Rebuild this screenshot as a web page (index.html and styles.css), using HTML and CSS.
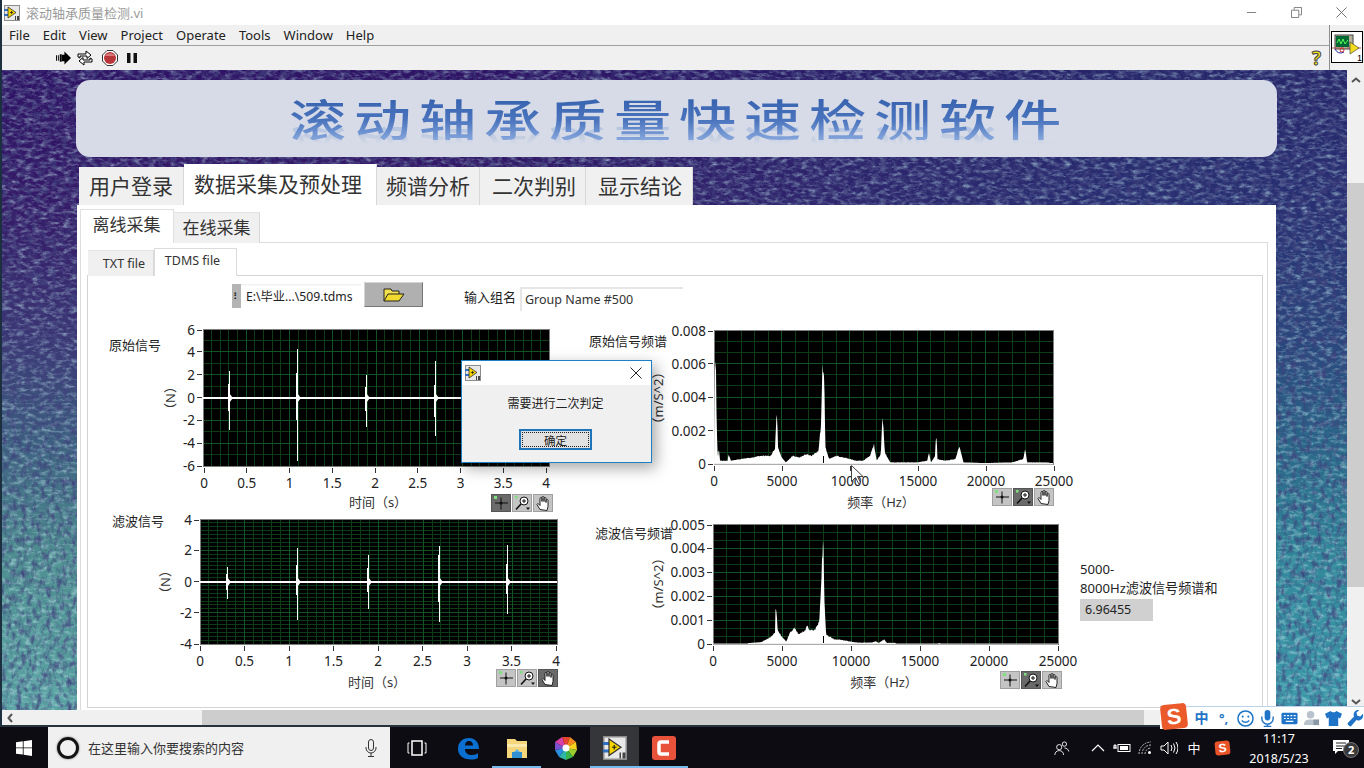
FILE: index.html
```html
<!DOCTYPE html>
<html lang="zh-CN">
<head>
<meta charset="utf-8">
<title>滚动轴承质量检测.vi</title>
<link rel="stylesheet" href="styles.css">
</head>
<body>
<svg class="defs" width="0" height="0" aria-hidden="true">
  <defs>
    <symbol id="lv" viewBox="0 0 16 16">
      <rect x=".5" y=".5" width="15" height="15" fill="#e8e8e8" stroke="#8c8c8c"/>
      <path d="M0 5h5M0 10h5" stroke="#2f6fc0" stroke-width="2"/>
      <path d="M4 2l8 5.5L4 13z" fill="#f5d400" stroke="#333" stroke-width=".8"/>
      <path d="M6 7.5h3M7.5 6v3" stroke="#222" stroke-width=".8"/>
      <path d="M11 11h1v4h-1zM13 11h2v4h-2z" fill="#444"/>
    </symbol>
    <filter id="grain" x="0" y="0" width="100%" height="100%">
      <feTurbulence type="fractalNoise" baseFrequency=".13 .27" numOctaves="4" seed="7"/>
      <feColorMatrix values="0 0 0 0 .5  0 0 0 0 .76  0 0 0 0 .82  1.4 0 0 0 -.62"/>
    </filter>
    <filter id="grain-dark" x="0" y="0" width="100%" height="100%">
      <feTurbulence type="fractalNoise" baseFrequency=".2 .12" numOctaves="3" seed="21"/>
      <feColorMatrix values="0 0 0 0 .05  0 0 0 0 .05  0 0 0 0 .2  0 2 0 0 -.85"/>
    </filter>
  </defs>
</svg>

<div class="screen">
  <div class="window">
    <header class="titlebar">
      <svg class="title-icon"><use href="#lv"/></svg>
      <span class="title-text">滚动轴承质量检测.vi</span>
      <div class="win-controls">
        <svg class="win-btn" viewBox="0 0 12 12"><path d="M1 6h10" stroke="#777"/></svg>
        <svg class="win-btn" viewBox="0 0 12 12"><path d="M.5 3.5h8v8h-8zM3.5 3V.5h8v8H9" fill="none" stroke="#777"/></svg>
        <svg class="win-btn" viewBox="0 0 12 12"><path d="M.5.5l11 11M11.5.5l-11 11" stroke="#666"/></svg>
      </div>
    </header>

    <div class="bars">
      <div class="bars-main">
        <nav class="menubar">
          <span>File</span><span>Edit</span><span>View</span><span>Project</span><span>Operate</span><span>Tools</span><span>Window</span><span>Help</span>
        </nav>
        <div class="toolbar">
          <svg class="tool" viewBox="0 0 16 14"><path d="M0 4h1v6H0zM2 4h1v6H2zM4 3h2v8H4z" fill="#000"/><path d="M6 3.5h3V0l7 7-7 7v-3.500H6z" fill="#000"/></svg>
          <svg class="tool tool-cont" viewBox="0 0 16 16"><path d="M1 7V4h8V1l5 4-4 3.500V6H3v2zM15 9v3H7v3l-5-4 4-3.500V10h7V8z" fill="#fff" stroke="#000"/></svg>
          <svg class="tool tool-stop" viewBox="0 0 16 16"><path d="M5 .5h6L15.500 5v6L11 15.500H5L.5 11V5z" fill="#fff" stroke="#333"/><circle cx="8" cy="8" r="6" fill="#b8363a"/><path d="M3 6a6 6 0 0 1 10 0z" fill="#d8787a"/></svg>
          <svg class="tool tool-pause" viewBox="0 0 10 10"><path d="M0 0h3.500v10H0zM6.500 0H10v10H6.500z" fill="#111"/></svg>
          <span class="help" aria-label="help">?</span>
        </div>
      </div>
      <div class="conn-pane">
        <svg class="conn-icon" viewBox="0 0 32 32">
          <rect x=".5" y=".5" width="31" height="31" fill="#fff" stroke="#000"/>
          <rect x="4" y="4" width="18" height="14" fill="#b5b39a" stroke="#444"/>
          <rect x="5" y="5" width="13" height="11" fill="#063"/>
          <path d="M6 12l2-4 2 5 2-5 2 5 3-4" fill="none" stroke="#5f5"/>
          <path d="M1 17h12M16 17h14" stroke="#b55" />
          <path d="M4 18q3 6 9 3" fill="none" stroke="#22a"/>
          <circle cx="11" cy="19" r="2" fill="none" stroke="#c33"/>
          <path d="M19 11l9 6-9 6z" fill="#f3dc1c" stroke="#333" stroke-width=".6"/>
          <text class="conn-num" x="26" y="30">1</text>
        </svg>
      </div>
    </div>

    <div class="workspace">
      <main class="canvas">
        <svg class="grain-layer"><rect width="100%" height="100%" filter="url(#grain)"/><rect width="100%" height="100%" filter="url(#grain-dark)"/></svg>
        <div class="banner"><h1 class="banner-text">滚动轴承质量快速检测软件</h1></div>
        <div class="tabs tabs-main">
          <div class="tab">用户登录</div>
          <div class="tab tab-on">数据采集及预处理</div>
          <div class="tab">频谱分析</div>
          <div class="tab">二次判别</div>
          <div class="tab">显示结论</div>
        </div>
        <section class="panel">
          <div class="tabs tabs-sub">
            <div class="tab tab-on">离线采集</div>
            <div class="tab">在线采集</div>
          </div>
          <div class="sub-body">
            <div class="tabs tabs-file">
              <div class="tab">TXT file</div>
              <div class="tab tab-on">TDMS file</div>
            </div>
            <div class="front" id="front">
              <div class="path-ctl"><span class="path-tag">⠇</span><span class="path-val">E:\毕业...\509.tdms</span></div>
              <button class="browse" aria-label="browse"><svg class="folder" viewBox="0 0 22 14"><path d="M1 13V1h7l1 2h7v3" fill="#f4e04a" stroke="#222"/><path d="M1 13l4-7h16l-5 7z" fill="#f1d92e" stroke="#222"/></svg></button>
              <span class="lbl lbl-group">输入组名</span>
              <div class="str-ctl">Group Name #500</div>
              <span class="lbl lbl-raw">原始信号</span>
              <span class="lbl lbl-rawfft">原始信号频谱</span>
              <span class="lbl lbl-flt">滤波信号</span>
              <span class="lbl lbl-fltfft">滤波信号频谱</span>
              <div class="sum-lbl">5000-<br>8000Hz滤波信号频谱和</div>
              <div class="num-ind">6.96455</div>
            </div>
          </div>
        </section>
      </main>
      <aside class="vscroll">
        <svg class="chev" viewBox="0 0 10 6"><path d="M1 5l4-3.500L9 5" fill="none" stroke="#555" stroke-width="2"/></svg>
        <div class="vthumb"></div>
        <svg class="chev" viewBox="0 0 10 6"><path d="M1 1l4 3.500L9 1" fill="none" stroke="#555" stroke-width="2"/></svg>
      </aside>
    </div>

    <div class="hscroll">
      <svg class="hchev" viewBox="0 0 6 10"><path d="M5 1L1.500 5 5 9" fill="none" stroke="#555" stroke-width="2"/></svg>
      <div class="hthumb"></div>
    </div>
  </div>

  <footer class="taskbar">
    <div class="start"><svg class="win-logo" viewBox="0 0 16 16"><path d="M0 2.300l6.800-1v6.200H0zM7.600 1.200L16 0v7.500H7.600zM0 8.300h6.800v6.300L0 13.700zM7.600 8.300H16V16l-8.400-1.200z" fill="#fff"/></svg></div>
    <div class="search">
      <span class="cortana"></span>
      <span class="search-text">在这里输入你要搜索的内容</span>
      <svg class="search-mic" viewBox="0 0 12 18"><rect x="3.500" y=".5" width="5" height="11" rx="2.500" fill="none" stroke="#333"/><path d="M1 8v1a5 5 0 0 0 10 0V8M6 14v3.500M3 17.500h6" fill="none" stroke="#333"/></svg>
    </div>
    <div class="task-view"><svg class="tv-icon" viewBox="0 0 20 16"><path d="M5 1h10v14H5z" fill="none" stroke="#fff" stroke-width="1.500"/><path d="M2.500 3H1v10h1.500M17.500 3H19v10h-1.500" fill="none" stroke="#fff"/></svg></div>
    <div class="task"><svg class="task-icon" viewBox="0 0 24 24"><path d="M2 13C2 5 8 2 13 2c6 0 10 4 10 11H9c0 4 3 6 7 6 3 0 5-1 6-2v5c-2 1-4 1.500-7 1.500C7 23.500 2 19 2 13zM9 9.500h8c0-3-1.500-4.500-4-4.500S9 7 9 9.500z" fill="#0a6fd0"/></svg></div>
    <div class="task task-run"><svg class="task-icon" viewBox="0 0 24 24"><path d="M2 3h8l2 2h10v17H2z" fill="#f5d67a"/><path d="M2 8h20v3H2z" fill="#fbe9ae"/><path d="M7 22v-6h10v6z" fill="#2f8fd0"/><path d="M9 16l3-3 3 3z" fill="#5ab0e8"/></svg></div>
    <div class="task"><svg class="task-icon" viewBox="0 0 24 24"><path d="M12 12L8 1h8z" fill="#e8432e"/><path d="M12 12l4-11 6 5z" fill="#f58a1f"/><path d="M12 12l10-6 1 8z" fill="#f6d21f"/><path d="M12 12l11 2-4 7z" fill="#9ccc2e"/><path d="M12 12l7 9-7 3z" fill="#39b54a"/><path d="M12 12v12l-7-3z" fill="#2fb8a8"/><path d="M12 12l-7 9-4-7z" fill="#2a8fe0"/><path d="M12 12L1 14l0-8z" fill="#7a4fd0"/><path d="M12 12L1 6l7-5z" fill="#d840a8"/><circle cx="12" cy="12" r="3.500" fill="#fff"/></svg></div>
    <div class="task task-run task-active"><svg class="task-icon" viewBox="0 0 16 16"><use href="#lv"/></svg></div>
    <div class="task task-run"><svg class="task-icon" viewBox="0 0 24 24"><rect width="24" height="24" rx="3" fill="#e8523a"/><path d="M17 6H9a2 2 0 0 0-2 2v8a2 2 0 0 0 2 2h8" fill="none" stroke="#fff" stroke-width="3.500"/></svg></div>
    <div class="tray">
      <svg class="tray-person" viewBox="0 0 18 18"><circle cx="6" cy="8" r="3" fill="none" stroke="#fff"/><path d="M1 17c0-3 2-5 5-5s5 2 5 5" fill="none" stroke="#fff"/><circle cx="12" cy="4.500" r="2.500" fill="none" stroke="#fff"/><path d="M12 9c2.500 0 4.500 1.500 5 4" fill="none" stroke="#fff"/></svg>
      <span class="tray-cell"><svg class="tray-icon" viewBox="0 0 14 14"><path d="M1 10l6-6 6 6" fill="none" stroke="#fff" stroke-width="1.200"/></svg></span>
      <span class="tray-cell"><svg class="tray-icon tray-wide" viewBox="0 0 18 14"><rect x="5" y="3.500" width="12" height="7" fill="none" stroke="#fff"/><rect x="7" y="5" width="8" height="4" fill="#fff"/><path d="M0 7h4M2 4v2M1 4h2v3H1z" fill="none" stroke="#fff"/></svg></span>
      <span class="tray-cell"><svg class="tray-icon" viewBox="0 0 14 14"><path d="M1 13a12 12 0 0 1 12-12M4 13a9 9 0 0 1 9-9M7 13a6 6 0 0 1 6-6" fill="none" stroke="#bbb" stroke-dasharray="2 1"/><circle cx="11.500" cy="11.500" r="1.500" fill="#fff"/></svg></span>
      <span class="tray-cell"><svg class="tray-icon tray-wide" viewBox="0 0 18 14"><path d="M1 5h3l4-4v12l-4-4H1z" fill="none" stroke="#fff"/><path d="M11 4q2 3 0 6M13.500 2.500q3 4.500 0 9M16 1q4 6 0 12" fill="none" stroke="#fff"/></svg></span>
      <span class="tray-cell tray-ime">中</span>
      <span class="tray-cell tray-sg"><span class="sg-mini">S</span></span>
      <div class="clock"><span>11:17</span><span>2018/5/23</span></div>
      <div class="notify">
        <svg class="notify-icon" viewBox="0 0 16 15"><path d="M0 0h16v11H5l-3 3v-3H0z" fill="#fff"/><path d="M3 3h10M3 6h10M3 8.500h6" stroke="#222"/></svg>
        <span class="notify-badge">2</span>
      </div>
    </div>
  </footer>

  <aside class="ime">
    <span class="ime-logo">S</span>
    <span class="ime-item ime-zh">中</span>
    <span class="ime-item ime-punc">°,</span>
    <svg class="ime-svg" viewBox="0 0 18 18"><circle cx="9" cy="9" r="8" fill="none" stroke="#1f74c8" stroke-width="1.600"/><circle cx="6" cy="7" r="1.100" fill="#1f74c8"/><circle cx="12" cy="7" r="1.100" fill="#1f74c8"/><path d="M5 11q4 4 8 0" fill="none" stroke="#1f74c8" stroke-width="1.500"/></svg>
    <svg class="ime-svg" viewBox="0 0 18 18"><rect x="6" y="0" width="6" height="11" rx="3" fill="#1f74c8"/><path d="M3 7v2a6 6 0 0 0 12 0V7M9 15v3M5 17.500h8" fill="none" stroke="#1f74c8" stroke-width="1.500"/></svg>
    <svg class="ime-svg" viewBox="0 0 18 18"><rect x=".5" y="3" width="17" height="12" rx="1.500" fill="#1f74c8"/><path d="M3 6h2M6.500 6h2M10 6h2M13.500 6h2M3 9h2M6.500 9h2M10 9h2M13.500 9h2M5 12h8" stroke="#fff" stroke-width="1.200"/></svg>
    <svg class="ime-svg" viewBox="0 0 18 18"><circle cx="8" cy="5" r="4" fill="#b8c2cc"/><path d="M1 16c0-5 3-6 7-6s7 1 7 6z" fill="#b8c2cc"/><rect x="11" y="10" width="6" height="6" fill="#8a98a6"/></svg>
    <svg class="ime-svg" viewBox="0 0 18 18"><path d="M6 1L0 4l2 5 2-1v9h10V8l2 1 2-5-6-3c-1 2-5 2-6 0z" fill="#1f74c8"/></svg>
    <svg class="ime-svg" viewBox="0 0 18 18"><path d="M17 4l-3 3-3-1-1-3 3-3c-3-.5-6 1.500-6 5 0 1 .2 1.500.5 2L1 13.500c-1.500 1.500 2 5 3.500 3.500L10 10.500c.5.300 1 .5 2 .5 3.500 0 5.500-3 5-7z" fill="#1f74c8"/></svg>
  </aside>

  <div class="dialog" role="dialog">
    <div class="dlg-title">
      <svg class="dlg-icon"><use href="#lv"/></svg>
      <svg class="dlg-close" viewBox="0 0 12 12"><path d="M.5.5l11 11M11.500.5l-11 11" stroke="#222"/></svg>
    </div>
    <div class="dlg-body">
      <p class="dlg-msg">需要进行二次判定</p>
      <button class="dlg-ok"><span class="dlg-ok-in">确定</span></button>
    </div>
  </div>

  <svg class="cursor" viewBox="0 0 12 19"><path d="M.5.5v16l4-4 3 6 2-1-3-6h5.500z" fill="#fff" stroke="#444"/></svg>
</div>
<script src="charts.js"></script>
</body>
</html>
```
FILE: styles.css
```css
* { box-sizing: border-box; }
html, body { margin: 0; padding: 0; }
body {
  width: 1364px; height: 768px; overflow: hidden; background: #000;
  font-family: "Noto Sans", "Noto Sans CJK SC", sans-serif; color: #222;
}
.defs { position: absolute; }
.screen { position: relative; width: 1364px; height: 768px; display: flex; flex-direction: column; }
.window { height: 727px; display: flex; flex-direction: column; border-left: 2px solid #1c3040; border-bottom: 2px solid #26323c; background: #f0f0f0; }

.titlebar { height: 25px; background: #fff; display: flex; align-items: center; padding-left: 2px; }
.title-icon { width: 16px; height: 16px; }
.title-text { margin-left: 6px; font-size: 13px; color: #9a9a9a; }
.win-controls { margin-left: auto; display: flex; gap: 34px; padding-right: 17px; align-items: center; }
.win-btn { width: 11px; height: 11px; }

.bars { height: 45px; display: flex; background: #f0f0f0; }
.bars-main { flex: 1; display: flex; flex-direction: column; border-right: 1px solid #8e8e8e; }
.menubar { height: 21px; display: flex; align-items: center; gap: 13px; padding-left: 7px; font-size: 13px; color: #222; border-bottom: 1px solid #a0a0a0; }
.toolbar { flex: 1; display: flex; align-items: center; padding-left: 54px; position: relative; padding-right: 8px; }
.tool { width: 15px; height: 14px; margin-right: 6px; }
.tool-cont { width: 16px; height: 16px; }
.tool-stop { width: 16px; height: 16px; margin-left: 3px; margin-right: 9px; }
.tool-pause { width: 10px; height: 10px; margin-right: 0; }
.help { margin-left: auto; font-size: 19px; font-weight: 700; color: #f4e31a; -webkit-text-stroke: 1px #444; line-height: 1; }
.conn-pane { width: 34px; padding: 6px 0 0 1px; }
.conn-icon { width: 32px; height: 32px; display: block; }
.conn-num { font-size: 9px; font-family: "Liberation Sans", sans-serif; fill: #000; }

.workspace { height: 640px; display: flex; }
.canvas {
  position: relative; flex: 1; overflow: hidden; display: flex; flex-direction: column;
  background: linear-gradient(180deg, #2e1264 0, #351b68 22%, #3a3674 42%, #3d6080 58%, #4e8e90 76%, #5aa3a3 100%);
}
.canvas::before {
  content: ""; position: absolute; inset: 0;
  background: linear-gradient(180deg, #26266a 0, #283072 22%, #29467c 42%, #2a6688 58%, #32889a 76%, #3c9aaa 100%);
  -webkit-mask-image: linear-gradient(90deg, transparent 35%, #000 85%);
  mask-image: linear-gradient(90deg, transparent 35%, #000 85%);
}
.grain-layer { position: absolute; inset: 0; width: 100%; height: 100%; }

.banner {
  position: relative; margin: 10px 0 0 74px; width: 1201px; height: 77px; background: #d6dbe7; border-radius: 14px;
  display: flex; justify-content: center; padding: 16px 0 0 4px;
}
.banner-text {
  margin: 0; font-size: 44px; line-height: 44px; height: 44px; font-weight: 500; letter-spacing: 6px;
  font-family: "Noto Sans CJK SC", sans-serif; white-space: nowrap;
  transform: scaleX(1.3); transform-origin: center;
  background: linear-gradient(180deg, #3560ad 0, #4a74bd 55%, #86a6dc 100%);
  -webkit-background-clip: text; background-clip: text; color: transparent;
  -webkit-box-reflect: below -13px linear-gradient(transparent 62%, rgba(255,255,255,.4));
}

.tabs { position: relative; display: flex; align-items: flex-end; }
.tab { display: flex; align-items: center; justify-content: center; background: #f0f0f0; color: #333; border-right: 1px solid #d8d8d8; }
.tab-on { background: #fff; }
.tabs-main { margin: 7px 0 0 77px; height: 41px; font-size: 21px; }
.tabs-main .tab { height: 38px; padding-bottom: 3px; }
.tabs-main .tab:nth-child(1) { width: 105px; }
.tabs-main .tab:nth-child(2) { width: 193px; height: 41px; padding: 0 4px 4px 0; }
.tabs-main .tab:nth-child(3) { width: 103px; }
.tabs-main .tab:nth-child(4) { width: 106px; padding-left: 3px; }
.tabs-main .tab:nth-child(5) { width: 107px; padding-left: 2px; }

.panel { position: relative; margin-left: 75px; width: 1199px; flex: 1; background: #fff; padding: 4px 8px 0 3px; display: flex; flex-direction: column; }
.tabs-sub { height: 34px; font-size: 17px; z-index: 1; margin-bottom: -1px; }
.tabs-sub .tab { height: 31px; border-top: 1px solid #e4e4e4; width: 86px; padding-bottom: 4px; }
.tabs-sub .tab-on { height: 34px; width: 94px; border: 1px solid #e0e0e0; border-bottom: 0; padding: 0 1px 7px 0; }
.sub-body { flex: 1; border: 1px solid #dcdcdc; border-bottom: 0; padding: 5px 4px 2px 6px; display: flex; flex-direction: column; }
.tabs-file { height: 28px; font-size: 12.500px; z-index: 1; margin: 0 0 -1px 1px; }
.tabs-file .tab { width: 66px; height: 26px; border-top: 1px solid #e4e4e4; padding: 0 0 0 7px; }
.tabs-file .tab-on { width: 83px; height: 28px; border: 1px solid #dcdcdc; border-bottom: 0; padding: 0 6px 5px 0; }
.front { position: relative; flex: 1; border: 1px solid #d4d4d4; }

.path-ctl { position: absolute; left: 144px; top: 8px; width: 129px; height: 24px; display: flex; align-items: center; font-size: 12.200px; background: linear-gradient(180deg, #eee 0, #fff 10%); }
.path-tag { width: 9px; height: 100%; background: #b4b4b4; font-size: 10px; display: flex; align-items: center; justify-content: center; overflow: hidden; color: #111; }
.path-val { margin-left: 5px; white-space: nowrap; }
.browse { position: absolute; left: 276px; top: 6px; width: 59px; height: 25px; padding: 0; background: #b0b0b0; border: 1px solid; border-color: #d4d4d4 #777 #777 #d4d4d4; display: flex; align-items: center; justify-content: center; }
.folder { width: 22px; height: 14px; }
.lbl { position: absolute; font-size: 13px; line-height: 18px; white-space: nowrap; color: #222; }
.lbl-group { left: 376px; top: 12px; }
.lbl-raw { left: 21px; top: 60px; }
.lbl-rawfft { left: 501px; top: 56px; }
.lbl-flt { left: 24px; top: 236px; }
.lbl-fltfft { left: 507px; top: 248px; }
.str-ctl { position: absolute; left: 432px; top: 11px; width: 163px; height: 24px; padding-left: 3px; font-size: 12.500px; line-height: 21px; background: #fff; border-top: 2px solid #e6e6e6; border-left: 2px solid #e6e6e6; color: #333; }
.sum-lbl { position: absolute; left: 992px; top: 284px; font-size: 13.100px; line-height: 19px; white-space: nowrap; }
.num-ind { position: absolute; left: 992px; top: 323px; width: 73px; height: 22px; background: #d0d0d0; padding-left: 5px; font-size: 12.500px; line-height: 22px; }
.chart { position: absolute; overflow: visible; }
.tick { font-size: 13.500px; fill: #222; font-family: "Noto Sans", sans-serif; }
.axis { font-size: 13px; fill: #333; font-family: "Noto Sans", "Noto Sans CJK SC", sans-serif; }

.vscroll { width: 17px; background: #f0f0f0; display: flex; flex-direction: column; align-items: center; justify-content: space-between; padding: 7px 0 5px; position: relative; }
.chev { width: 10px; height: 6px; }
.vthumb { position: absolute; left: 0; right: 0; top: 113px; height: 404px; background: #cdcdcd; }
.hscroll { height: 15px; position: relative; background: #f0f0f0; display: flex; align-items: center; padding-left: 5px; }
.hchev { width: 6px; height: 10px; }
.hthumb { position: absolute; left: 200px; top: 0; bottom: 0; width: 942px; background: #cdcdcd; }

.taskbar { height: 41px; background: #0c0c12; display: flex; align-items: stretch; color: #fff; }
.start { width: 48px; display: flex; align-items: center; justify-content: center; }
.win-logo { width: 16px; height: 16px; }
.search { width: 342px; background: #f0f0f0; color: #333; display: flex; align-items: center; font-size: 13px; padding-left: 9px; }
.cortana { width: 22px; height: 22px; border-radius: 50%; border: 3px solid #111; box-shadow: 0 0 2px #555; }
.search-text { margin-left: 9px; }
.search-mic { width: 12px; height: 18px; margin-left: auto; margin-right: 13px; }
.task-view { width: 53px; display: flex; align-items: center; justify-content: center; }
.tv-icon { width: 20px; height: 16px; }
.task { width: 49px; display: flex; align-items: center; justify-content: center; }
.task-run { box-shadow: inset 0 -2px 0 #76b9ed, inset 3px 0 0 #0c0c12, inset -3px 0 0 #0c0c12; }
.task-active { background: #34363a; box-shadow: inset 0 -2px 0 #76b9ed; }
.task-icon { width: 24px; height: 24px; }
.tray { margin-left: auto; width: 319px; display: flex; align-items: center; }
.tray-person { width: 16px; height: 16px; margin: 0 17px 0 9px; }
.tray-cell { width: 24px; display: flex; justify-content: center; align-items: center; }
.tray-icon { width: 14px; height: 14px; }
.tray-wide { width: 18px; }
.tray-ime { font-size: 13px; margin-left: 2px; }
.tray-sg { width: 32px; margin-left: 1px; }
.sg-mini { width: 15px; height: 14px; background: #e8532a; border-radius: 3px; color: #fff; font: 700 12px/14px "Liberation Sans", sans-serif; text-align: center; transform: rotate(-6deg); }
.clock { width: 78px; margin-left: 3px; padding-top: 1px; display: flex; flex-direction: column; align-items: center; gap: 3px; font-size: 12.500px; line-height: 17px; }
.notify { position: relative; width: 48px; display: flex; justify-content: center; }
.notify-icon { width: 16px; height: 15px; }
.notify-badge { position: absolute; left: 26px; top: 2px; width: 16px; height: 16px; border-radius: 50%; background: #3a3a3a; border: 1px solid #777; font-size: 11px; font-weight: 700; line-height: 14px; text-align: center; }

.ime { position: absolute; left: 1160px; top: 706px; width: 204px; height: 23px; background: #fff; border-top: 1px solid #bcd4ea; display: flex; align-items: center; padding-left: 33px; gap: 5px; }
.ime-logo { position: absolute; left: 1px; top: -3px; width: 26px; height: 25px; background: #ea5a2a; border-radius: 4px; color: #fff; font: 700 22px/25px "Liberation Sans", sans-serif; text-align: center; transform: rotate(-6deg); }
.ime-item { color: #1f74c8; font-weight: 700; width: 17px; text-align: center; font-size: 14px; line-height: 18px; }
.ime-punc { font-size: 13px; }
.ime-svg { width: 17px; height: 17px; }

.dialog { position: absolute; left: 461px; top: 360px; width: 191px; height: 103px; background: #f0f0f0; border: 1px solid #1f7fc4; box-shadow: 4px 5px 14px rgba(0,0,0,.35); display: flex; flex-direction: column; }
.dlg-title { height: 24px; background: #fff; display: flex; align-items: center; justify-content: space-between; padding: 0 9px 0 3px; }
.dlg-icon { width: 16px; height: 16px; }
.dlg-close { width: 12px; height: 12px; }
.dlg-body { flex: 1; display: flex; flex-direction: column; align-items: center; padding-right: 2px; }
.dlg-msg { margin: 10px 0 0; font-size: 12px; line-height: 18px; color: #222; }
.dlg-ok { margin-top: 16px; width: 73px; height: 21px; padding: 1px; background: #e1e1e1; border: 2px solid #1d74b8; font: 11.500px "Noto Sans CJK SC", sans-serif; color: #222; }
.dlg-ok-in { display: block; height: 100%; line-height: 15px; border: 1px dotted #222; }
.cursor { position: absolute; left: 851px; top: 465px; width: 12px; height: 19px; }
```
FILE: charts.js
```js
(function () {
  var NS = 'http://www.w3.org/2000/svg';
  var front = document.getElementById('front');
  var ORIGIN_X = 88, ORIGIN_Y = 276;
  var seed = 11;
  function rnd() { seed = (seed * 16807) % 2147483647; return seed / 2147483647; }
  function el(name, attrs, parent, text) {
    var n = document.createElementNS(NS, name);
    for (var k in attrs) n.setAttribute(k, attrs[k]);
    if (text != null) n.textContent = text;
    if (parent) parent.appendChild(n);
    return n;
  }

  var spectrumA = [[0,0],[60,.0065],[130,.0065],[200,.0023],[280,.0003],[350,.001],[450,.0002],[1000,.0002],[1080,.0006],[1250,.0002],[2000,.0003],[2800,.0004],[3500,.0005],[4200,.0005],[4500,.001],[4600,.0029],[4660,.0029],[4720,.001],[5000,.0004],[5300,.0001],[5800,.0005],[6300,.0004],[6800,.0006],[7200,.0005],[7700,.0008],[7900,.0025],[8000,.0059],[8080,.0059],[8140,.0046],[8220,.001],[8500,.0003],[9000,.0005],[9600,.0004],[10500,.0002],[11000,.0002],[11500,.0005],[11800,.0012],[12000,.0002],[12300,.0006],[12400,.0027],[12460,.0027],[12600,.0007],[13000,.0001],[15000,.0001],[15720,.0002],[15850,.0007],[16000,.0001],[16300,.0005],[16360,.0016],[16420,.0016],[16480,.0003],[17000,.0002],[17800,.0003],[18100,.0011],[18400,.0001],[20000,.00006],[22000,.0001],[22800,.0003],[22950,.0009],[23100,.0001],[24500,.0001],[25000,.00005]];
  var spectrumB = [[2500,0],[2560,.00004],[3500,.00008],[4200,.0003],[4500,.0005],[4530,.0015],[4590,.0015],[4680,.0006],[5000,.0003],[5300,.0001],[5600,.0005],[5900,.0007],[6200,.0004],[6700,.0006],[6820,.0008],[7000,.0006],[7400,.0006],[7700,.001],[7900,.0035],[7950,.0042],[8010,.0042],[8060,.002],[8200,.0004],[8800,.0002],[9300,.00018],[10000,.0001],[10500,.00006],[11500,.00006],[11800,.00012],[12000,.00004],[12400,.0002],[12600,.00005],[13200,.00005],[13300,0],[16300,0],[16400,.00005],[16500,0],[25000,0]];

  var charts = [
    { box: [100, 320, 460, 195], plot: [203, 549, 329, 466], xLabels: ['0','0.5','1','1.5','2','2.5','3','3.5','4'], xSpan: [204, 546],
      yLabels: ['6','4','2','0','-2','-4','-6'], xMinor: 5, yMinor: 2, xTitle: '时间（s）', xTitleAt: [378, 507], yTitle: '（N）', yTitleAt: [175, 398],
      tools: [491, 494, 0],
      base: 398, spikes: [[229,371,430,384,411],[297,349,461,373,420],[366,375,427,387,411],[435,361,436,385,417]] },
    { box: [640, 320, 450, 195], plot: [714, 1053, 330, 464], xLabels: ['0','5000','10000','15000','20000','25000'], xSpan: [714, 1054],
      yLabels: ['0.008','0.006','0.004','0.002','0'], xMinor: 5, yMinor: 3, xTitle: '频率（Hz）', xTitleAt: [881, 507], yTitle: '（m/S^2）', yTitleAt: [663, 398],
      tools: [992, 488, 1],
      spectrum: spectrumA, vMax: .008, notches: [[823,456,1,7]] },
    { box: [100, 510, 480, 190], plot: [200, 557, 519, 644], xLabels: ['0','0.5','1','1.5','2','2.5','3','3.5','4'], xSpan: [200, 556],
      yLabels: ['4','2','0','-2','-4'], xMinor: 5, yMinor: 8, xTitle: '时间（s）', xTitleAt: [377, 687], yTitle: '（N）', yTitleAt: [170, 582],
      tools: [496, 669, 2],
      base: 582, spikes: [[227,567,599,574,590],[297,548,620,565,595],[368,555,609,568,592],[439,546,622,555,602],[507,545,614,564,594]] },
    { box: [640, 510, 450, 190], plot: [713, 1058, 524, 644], xLabels: ['0','5000','10000','15000','20000','25000'], xSpan: [713, 1058],
      yLabels: ['0.005','0.004','0.003','0.002','0.001','0'], xMinor: 5, yMinor: 3, xTitle: '频率（Hz）', xTitleAt: [884, 687], yTitle: '（m/S^2）', yTitleAt: [663, 584],
      tools: [1000, 671, 1],
      spectrum: spectrumB, vMax: .005, notches: [[823,636,1,7]] }
  ];

  function gridLines(svg, c) {
    var p = c.plot, x0 = p[0], x1 = p[1], y0 = p[2], y1 = p[3];
    el('rect', { x: x0, y: y0, width: x1 - x0, height: y1 - y0, fill: '#000' }, svg);
    var nx = c.xLabels.length - 1, ny = c.yLabels.length - 1, i, v;
    var minor = el('g', { stroke: '#0d3d17', 'stroke-width': 1, 'shape-rendering': 'crispEdges' }, svg);
    var major = el('g', { stroke: '#135424', 'stroke-width': 1, 'shape-rendering': 'crispEdges' }, svg);
    for (i = 0; i <= nx * c.xMinor; i++) {
      v = x0 + (x1 - x0) * i / (nx * c.xMinor);
      el('line', { x1: v, x2: v, y1: y0, y2: y1 }, i % c.xMinor ? minor : major);
    }
    for (i = 0; i <= ny * c.yMinor; i++) {
      v = y0 + (y1 - y0) * i / (ny * c.yMinor);
      el('line', { x1: x0, x2: x1, y1: v, y2: v }, i % c.yMinor ? minor : major);
    }
    el('rect', { x: x0, y: y0, width: x1 - x0, height: y1 - y0, fill: 'none', stroke: '#7d7d7d', 'shape-rendering': 'crispEdges' }, svg);
  }

  function axes(svg, c) {
    var p = c.plot, ny = c.yLabels.length - 1, nx = c.xLabels.length - 1;
    c.yLabels.forEach(function (t, i) {
      var y = p[2] + (p[3] - p[2]) * i / ny;
      y = Math.min(Math.max(y, p[2] + 1), p[3]);
      el('line', { x1: p[0] - 6, x2: p[0] - 1, y1: y, y2: y, stroke: '#333', 'shape-rendering': 'crispEdges' }, svg);
      el('text', { class: 'tick', x: p[0] - 8, y: y + 5, 'text-anchor': 'end' }, svg, t);
    });
    c.xLabels.forEach(function (t, i) {
      var x = c.xSpan[0] + (c.xSpan[1] - c.xSpan[0]) * i / nx;
      el('line', { x1: x, x2: x, y1: p[3] + 2, y2: p[3] + 7, stroke: '#333', 'shape-rendering': 'crispEdges' }, svg);
      el('text', { class: 'tick', x: x, y: p[3] + 22, 'text-anchor': 'middle' }, svg, t);
    });
    el('text', { class: 'axis', x: c.xTitleAt[0], y: c.xTitleAt[1], 'text-anchor': 'middle' }, svg, c.xTitle);
    el('text', { class: 'axis', x: c.yTitleAt[0], y: c.yTitleAt[1], 'text-anchor': 'middle',
      transform: 'rotate(-90 ' + c.yTitleAt[0] + ' ' + c.yTitleAt[1] + ')' }, svg, c.yTitle);
  }

  function spikes(svg, c) {
    var p = c.plot, crisp = 'crispEdges';
    el('rect', { x: p[0], y: c.base - 1, width: p[1] - p[0], height: 2, fill: '#fff', 'shape-rendering': crisp }, svg);
    c.spikes.forEach(function (s) {
      el('rect', { x: s[0], y: s[1], width: 1, height: s[2] - s[1], fill: '#fff', 'shape-rendering': crisp }, svg);
      el('rect', { x: s[0] - 1, y: s[3], width: 1, height: s[4] - s[3], fill: '#fff', 'shape-rendering': crisp }, svg);
      el('path', { d: 'M' + s[0] + ' ' + (c.base - 5) + 'L' + (s[0] + 4) + ' ' + c.base + 'L' + s[0] + ' ' + (c.base + 5) + 'z', fill: '#fff' }, svg);
    });
  }

  function spectrum(svg, c) {
    var p = c.plot, w = p[1] - p[0], h = p[3] - p[2], pts = [[p[0], p[3]]], data = c.spectrum, j = 0;
    for (var x = p[0]; x <= p[1]; x += .5) {
      var f = (x - p[0]) / w * 25000;
      while (j < data.length - 2 && data[j + 1][0] < f) j++;
      var a = data[j], b = data[j + 1];
      var t = Math.max(0, Math.min(1, (f - a[0]) / (b[0] - a[0])));
      var v = a[1] + (b[1] - a[1]) * t;
      v = v * (.9 + rnd() * .14);
      pts.push([x, p[3] - Math.min(h, v / c.vMax * h)]);
    }
    pts.push([p[1], p[3]]);
    el('polygon', { points: pts.map(function (q) { return q[0] + ',' + q[1].toFixed(1); }).join(' '), fill: '#fff' }, svg);
    el('line', { x1: p[0], x2: p[1], y1: p[3], y2: p[3], stroke: '#ddd', 'stroke-width': 1 }, svg);
    c.notches.forEach(function (n) { el('rect', { x: n[0], y: n[1], width: n[2], height: n[3], fill: '#000' }, svg); });
  }

  var TOOL_PATHS = [
    function (g) {
      el('path', { d: 'M2 8.500h13M8 3v12', stroke: '#111', fill: 'none' }, g);
      el('circle', { cx: 8, cy: 8.500, r: 1.500, fill: '#111' }, g);
      el('rect', { x: 1, y: 1.500, width: 3, height: 3, fill: '#7fe07f' }, g);
    },
    function (g) {
      el('circle', { cx: 10, cy: 6.500, r: 4, fill: '#fff', stroke: '#111' }, g);
      el('path', { d: 'M10 4.500v4M8 6.500h4', stroke: '#111' }, g);
      el('path', { d: 'M7 9.500L2 15', stroke: '#111', 'stroke-width': 1.6 }, g);
      el('path', { d: 'M12 13h4l-2 2.500z', fill: '#111' }, g);
      el('rect', { x: 1, y: 1.500, width: 2.5, height: 2.5, fill: '#7fe07f' }, g);
    },
    function (g) {
      el('path', { d: 'M5 15l-3-5 1-1 2 2V4a1 1 0 0 1 2 0v3-4a1 1 0 0 1 2 0v4-3a1 1 0 0 1 2 0v4-2a1 1 0 0 1 2 0v6l-1 4z', fill: '#fff', stroke: '#111', 'stroke-width': .9 }, g);
    }
  ];

  function tools(svg, c) {
    var x = c.tools[0], y = c.tools[1], on = c.tools[2];
    for (var i = 0; i < 3; i++) {
      var bx = x + i * 21;
      el('rect', { x: bx + .5, y: y + .5, width: 19, height: 17, fill: i === on ? '#6a6a6a' : '#c4c4c4', stroke: i === on ? '#555' : '#a0a0a0' }, svg);
      var g = el('g', { transform: 'translate(' + (bx + 2) + ' ' + (y + .5) + ')' }, svg);
      TOOL_PATHS[i](g);
    }
  }

  charts.forEach(function (c) {
    var b = c.box;
    var svg = el('svg', { class: 'chart', viewBox: b.join(' '), width: b[2], height: b[3] }, front);
    svg.style.left = (b[0] - ORIGIN_X) + 'px';
    svg.style.top = (b[1] - ORIGIN_Y) + 'px';
    gridLines(svg, c);
    axes(svg, c);
    if (c.spikes) spikes(svg, c); else spectrum(svg, c);
    tools(svg, c);
  });
})();
```
